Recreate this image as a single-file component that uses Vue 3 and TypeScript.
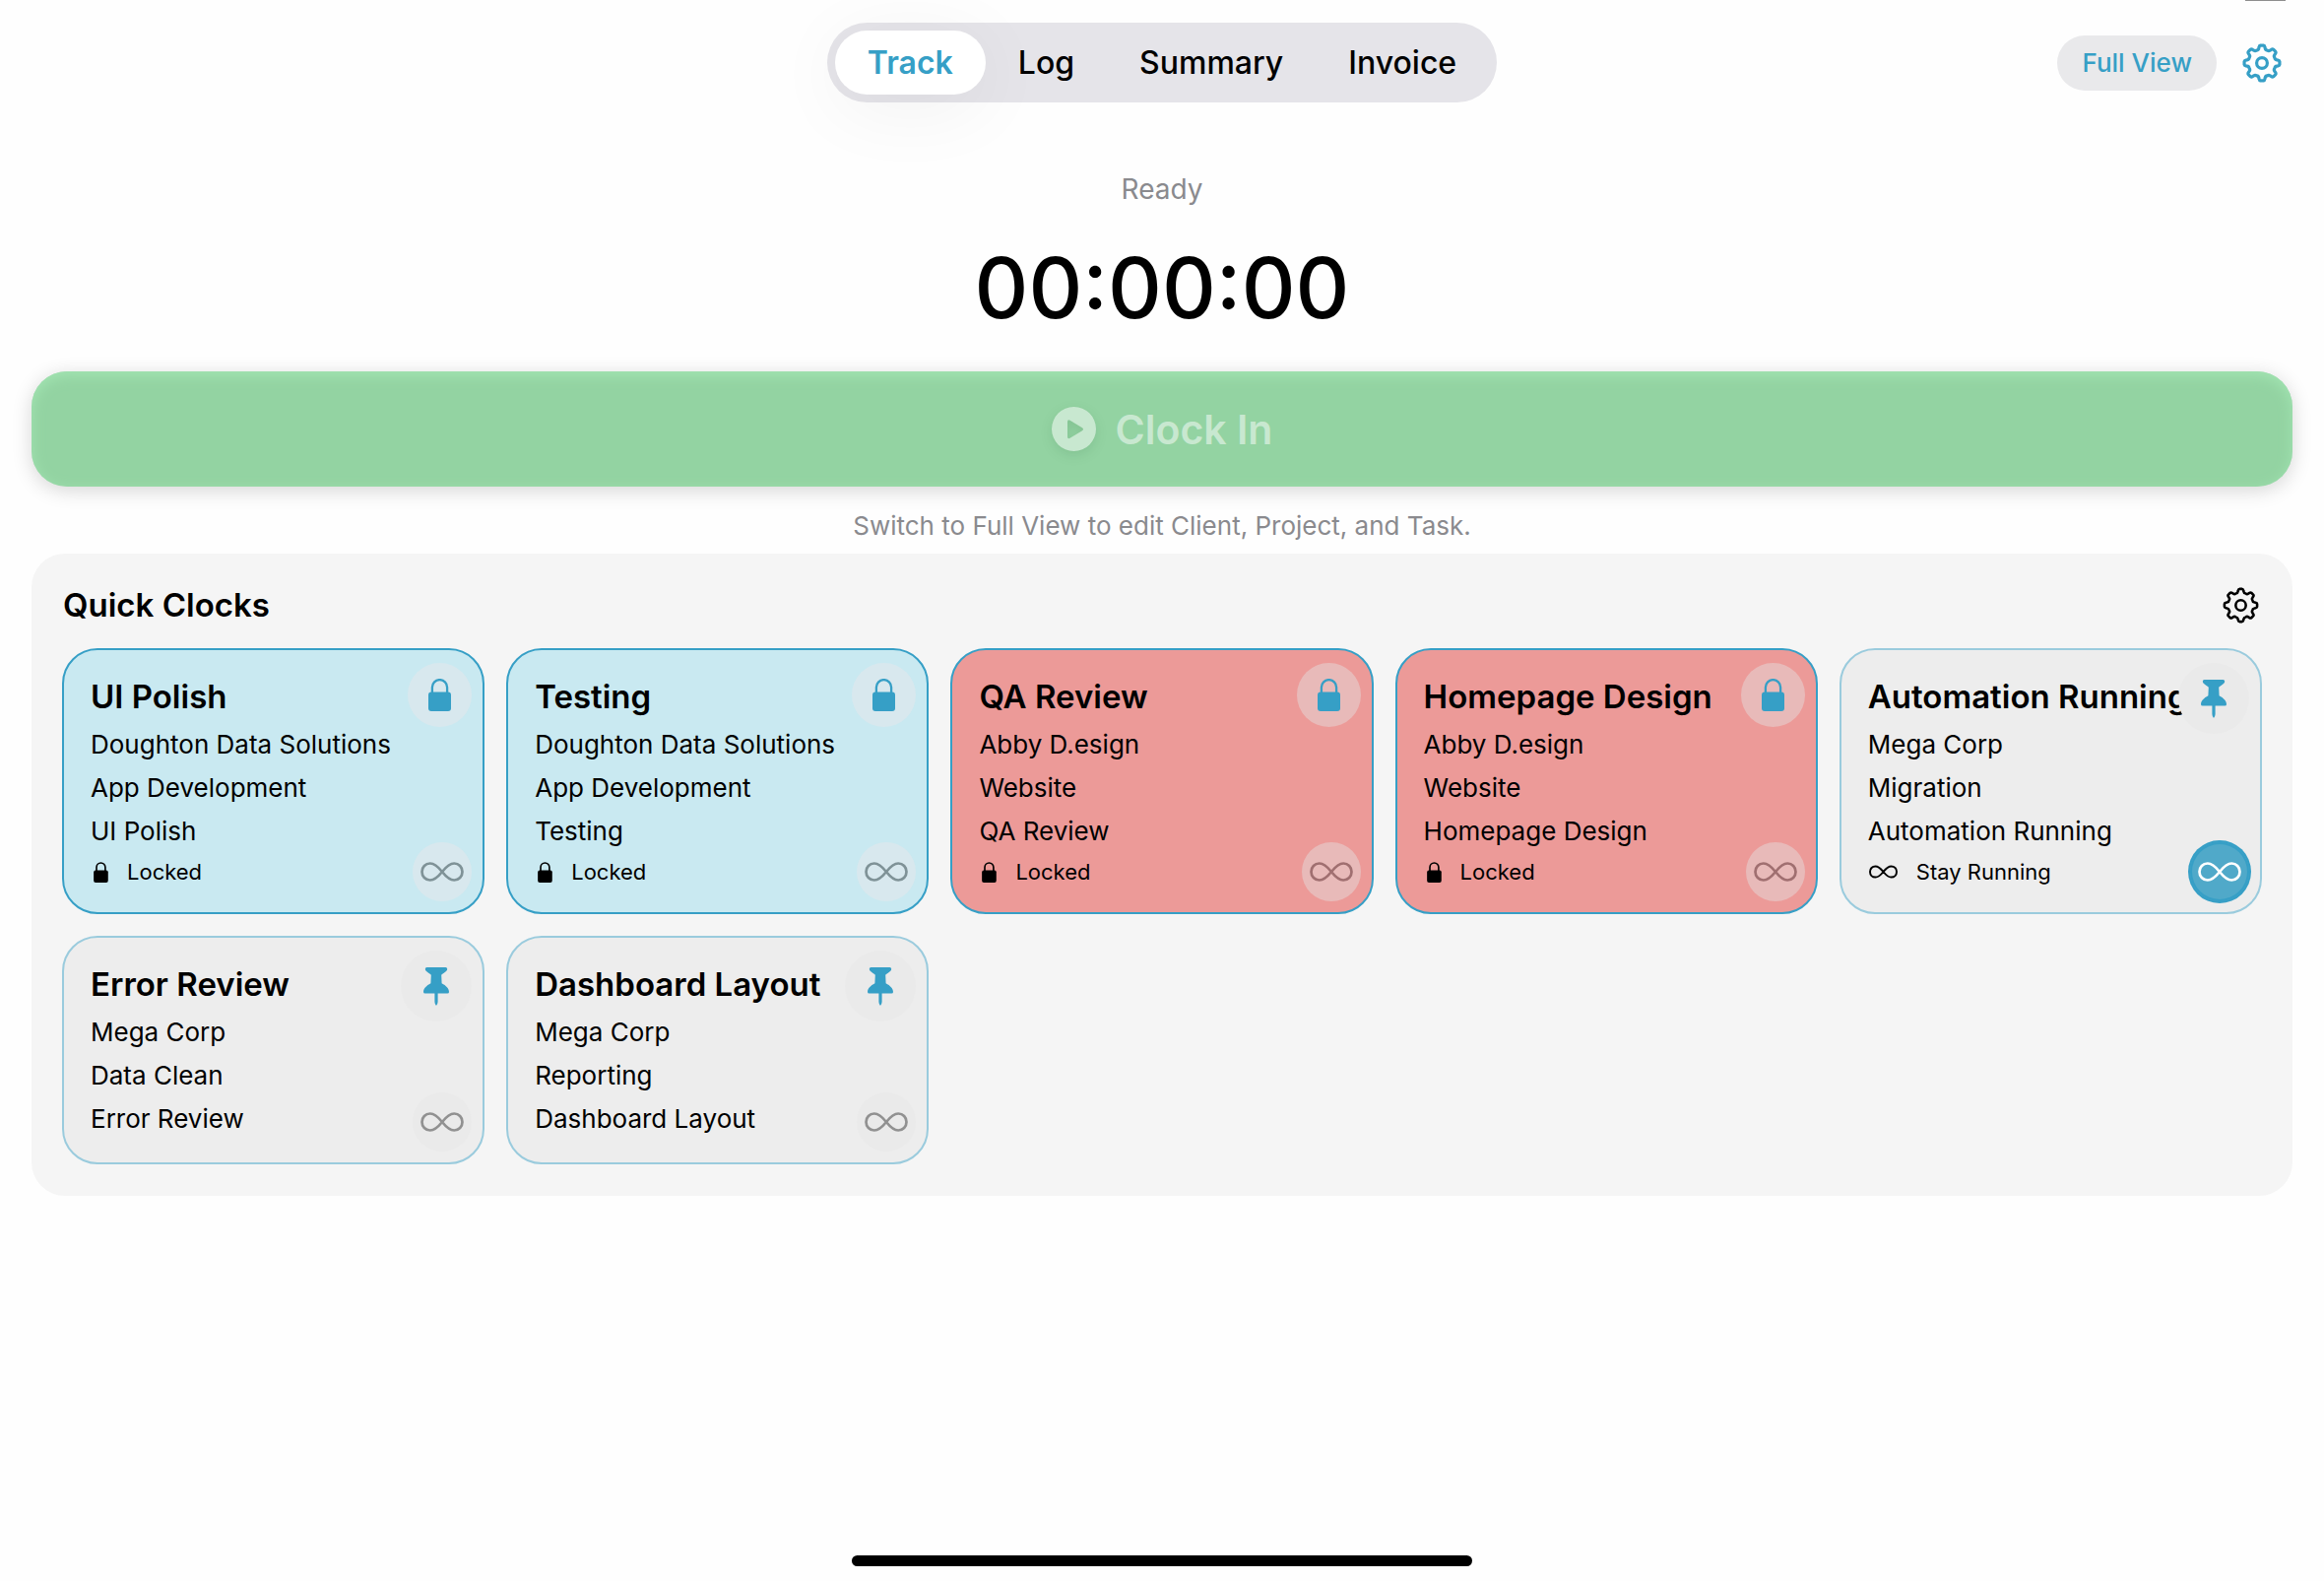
<script setup lang="ts">
import { ref } from 'vue'

type Tone = 'blue' | 'red' | 'plain'

interface QuickClock {
  id: number
  title: string
  client: string
  project: string
  task: string
  tone: Tone
  locked: boolean
  stayRunning: boolean
}

const tabs = ['Track', 'Log', 'Summary', 'Invoice']
const activeTab = ref('Track')

const clocks = ref<QuickClock[]>([
  { id: 1, title: 'UI Polish', client: 'Doughton Data Solutions', project: 'App Development', task: 'UI Polish', tone: 'blue', locked: true, stayRunning: false },
  { id: 2, title: 'Testing', client: 'Doughton Data Solutions', project: 'App Development', task: 'Testing', tone: 'blue', locked: true, stayRunning: false },
  { id: 3, title: 'QA Review', client: 'Abby D.esign', project: 'Website', task: 'QA Review', tone: 'red', locked: true, stayRunning: false },
  { id: 4, title: 'Homepage Design', client: 'Abby D.esign', project: 'Website', task: 'Homepage Design', tone: 'red', locked: true, stayRunning: false },
  { id: 5, title: 'Automation Running', client: 'Mega Corp', project: 'Migration', task: 'Automation Running', tone: 'plain', locked: false, stayRunning: true },
  { id: 6, title: 'Error Review', client: 'Mega Corp', project: 'Data Clean', task: 'Error Review', tone: 'plain', locked: false, stayRunning: false },
  { id: 7, title: 'Dashboard Layout', client: 'Mega Corp', project: 'Reporting', task: 'Dashboard Layout', tone: 'plain', locked: false, stayRunning: false },
])

const infinityPath =
  'M22 10C18 5 14 1.5 9.8 1.5C5 1.5 1.5 5.2 1.5 10S5 18.5 9.8 18.5C14 18.5 18 15 22 10C26 5 30 1.5 34.2 1.5C39 1.5 42.5 5.2 42.5 10S39 18.5 34.2 18.5C30 18.5 26 15 22 10Z'

// Eight-toothed gear outline centred on 20,20, with curved tooth tips and valleys.
function gearOutline(): string {
  const at = (deg: number, r: number): string => {
    const a = ((deg - 90) * Math.PI) / 180
    return `${(20 + r * Math.cos(a)).toFixed(2)} ${(20 + r * Math.sin(a)).toFixed(2)}`
  }
  let d = ''
  for (let i = 0; i < 8; i++) {
    const c = i * 45
    d += `${i === 0 ? 'M' : 'L'}${at(c - 12, 15.4)}`
    d += `L${at(c - 10, 16.6)}Q${at(c - 8.5, 18)} ${at(c - 5, 18)}`
    d += `L${at(c + 5, 18)}Q${at(c + 8.5, 18)} ${at(c + 10, 16.6)}`
    d += `L${at(c + 12, 15.4)}Q${at(c + 14.5, 13.6)} ${at(c + 22.5, 14)}Q${at(c + 30.5, 13.6)} ${at(c + 33, 15.4)}`
  }
  return d + 'Z'
}
const gearPath = gearOutline()
</script>

<template>
  <div class="page">
    <div class="grabber"></div>
    <header class="topbar">
      <nav class="tabs" aria-label="Sections">
        <button
          v-for="tab in tabs"
          :key="tab"
          type="button"
          class="tab"
          :class="{ active: tab === activeTab }"
          @click="activeTab = tab"
        >{{ tab }}</button>
      </nav>
      <div class="actions">
        <button type="button" class="full-view">Full View</button>
        <button type="button" class="icon-button accent" aria-label="Settings">
          <svg class="gear" viewBox="0 0 40 40" fill="none" stroke="currentColor" stroke-width="3.2" stroke-linejoin="round">
            <path :d="gearPath" />
            <circle cx="20" cy="20" r="5.4" />
          </svg>
        </button>
      </div>
    </header>

    <main class="content">
      <p class="status">Ready</p>
      <p class="timer">00:00:00</p>
      <button type="button" class="clock-in" disabled>
        <svg class="play" viewBox="0 0 45 45">
          <path fill="currentColor" fill-rule="evenodd" d="M22.500 0A22.500 22.500 0 1 1 22.500 45A22.500 22.500 0 1 1 22.500 0ZM16 15.200V30.200Q16 33 18.600 31.800L31 24.300Q33 22.800 31 21.200L18.600 13.700Q16 12.500 16 15.200Z" />
        </svg>
        <span>Clock In</span>
      </button>
      <p class="hint">Switch to Full View to edit Client, Project, and Task.</p>

      <section class="panel">
        <div class="panel-head">
          <h2>Quick Clocks</h2>
          <button type="button" class="icon-button" aria-label="Quick Clock settings">
            <svg class="gear small" viewBox="0 0 40 40" fill="none" stroke="currentColor" stroke-width="2.8" stroke-linejoin="round">
              <path :d="gearPath" />
              <circle cx="20" cy="20" r="5.6" />
            </svg>
          </button>
        </div>

        <div class="grid">
          <article v-for="clock in clocks" :key="clock.id" class="card" :class="clock.tone">
            <h3>{{ clock.title }}</h3>
            <p class="line">{{ clock.client }}</p>
            <p class="line">{{ clock.project }}</p>
            <p class="line">{{ clock.task }}</p>
            <p v-if="clock.locked" class="state">
              <svg class="mini-lock" viewBox="-3 0 26 33">
                <path fill="none" stroke="currentColor" stroke-width="2.6" d="M4.500 15V8.500A7 7 0 0 1 18.500 8.500V15" />
                <rect x="0" y="13.500" width="23" height="19.500" rx="3" fill="currentColor" />
              </svg>
              <span>Locked</span>
            </p>
            <p v-else-if="clock.stayRunning" class="state">
              <svg class="mini-infinity" viewBox="0 0 44 20" fill="none" stroke="currentColor" stroke-width="3">
                <path :d="infinityPath" />
              </svg>
              <span>Stay Running</span>
            </p>

            <button v-if="clock.locked" type="button" class="badge lock" aria-label="Unlock">
              <svg width="23" height="33" viewBox="0 0 23 33">
                <path fill="none" stroke="currentColor" stroke-width="2.300" d="M3.900 15V8.700A7.600 7.600 0 0 1 19.100 8.700V15" />
                <rect x="0" y="13.500" width="23" height="19.500" rx="3" fill="currentColor" />
              </svg>
            </button>
            <button v-else type="button" class="badge pin" aria-label="Unpin">
              <svg width="26" height="39" viewBox="0 0 26 39">
                <path fill="currentColor" d="M3.500 0H22.500Q24.200 0 24.200 1.700Q24.200 3 23 4Q20.800 6 18.600 7.200L18.200 8L18.600 16.300C23 18.500 26 21.800 26 25Q26 26.600 24.300 26.600H14.600V35Q14.600 37 13 39Q11.400 37 11.400 35V26.600H1.700Q0 26.600 0 25C0 21.800 3 18.500 7.400 16.300L7.800 8L7.400 7.200Q5.200 6 3 4Q1.800 3 1.800 1.700Q1.800 0 3.500 0Z" />
              </svg>
            </button>

            <button
              type="button"
              class="badge infinity"
              :class="{ on: clock.stayRunning }"
              :aria-pressed="clock.stayRunning"
              aria-label="Stay Running"
              @click="clock.stayRunning = !clock.stayRunning"
            >
              <svg width="44" height="20" viewBox="0 0 44 20" fill="none" stroke="currentColor" stroke-width="2.700">
                <path :d="infinityPath" />
              </svg>
            </button>
          </article>
        </div>
      </section>
    </main>

    <div class="home-indicator"></div>
  </div>
</template>

<style>
body {
  margin: 0;
  background: #fefefe;
}
</style>

<style scoped>
.page {
  --accent: #369fc6;
  position: relative;
  display: flex;
  flex-direction: column;
  box-sizing: border-box;
  min-height: 100vh;
  padding: 23px 32px 15px;
  font-family: Inter, "Liberation Sans", sans-serif;
  color: #000;
}

button {
  margin: 0;
  padding: 0;
  border: 0;
  background: none;
  font: inherit;
  color: inherit;
}

p,
h2,
h3 {
  margin: 0;
}

svg {
  display: block;
}

.grabber {
  position: absolute;
  top: 0;
  right: 39px;
  width: 41px;
  height: 1px;
  background: #8e8e8e;
}

.topbar {
  display: grid;
  grid-template-columns: 1fr auto 1fr;
  align-items: center;
}

.tabs {
  grid-column: 2;
  display: flex;
  padding: 8px;
  border-radius: 41px;
  background: #e5e4e9;
}

.tab {
  padding: 0 33px;
  border-radius: 33px;
  font-size: 32px;
  font-weight: 500;
  line-height: 65px;
}

.tab.active {
  background: #fff;
  color: var(--accent);
  font-weight: 600;
  box-shadow: 0 12px 80px rgba(0, 0, 0, 0.06);
}

.actions {
  display: flex;
  align-items: center;
  justify-content: flex-end;
  gap: 26px;
  padding-right: 11px;
}

.full-view {
  padding: 0 25px;
  border-radius: 28px;
  background: #e9e9eb;
  color: var(--accent);
  font-size: 26px;
  font-weight: 500;
  line-height: 56px;
}

.accent {
  color: var(--accent);
}

.gear {
  width: 40px;
  height: 40px;
}

.gear.small {
  width: 37px;
  height: 37px;
}

.content {
  display: flex;
  flex-direction: column;
}

.status {
  margin-top: 70px;
  color: #8a8a8e;
  font-size: 28px;
  line-height: 36px;
  text-align: center;
}

.timer {
  margin-top: 31px;
  font-size: 85px;
  font-weight: 500;
  line-height: 104px;
  text-align: center;
}

.clock-in {
  display: flex;
  align-items: center;
  justify-content: center;
  gap: 20px;
  height: 117px;
  margin-top: 32px;
  border-radius: 36px;
  background: #93d3a2;
  box-shadow: 0 4px 20px rgba(0, 0, 0, 0.16), inset 0 4px 14px #a3e5b3;
  color: #c8e8d0;
  font-size: 41px;
  font-weight: 600;
}

.play {
  width: 45px;
  height: 45px;
  filter: drop-shadow(0 4px 6px rgba(0, 60, 20, 0.1));
}

.hint {
  margin-top: 24px;
  color: #8a8a8e;
  font-size: 26px;
  line-height: 32px;
  text-align: center;
}

.panel {
  margin-top: 12px;
  padding: 32px 31px;
  border-radius: 34px;
  background: #f5f5f5;
}

.panel-head {
  display: flex;
  align-items: center;
  justify-content: space-between;
  padding: 0 3px 0 1px;
}

.panel-head h2 {
  font-size: 33px;
  font-weight: 600;
  line-height: 40px;
}

.grid {
  display: grid;
  grid-template-columns: repeat(5, minmax(0, 1fr));
  align-items: start;
  gap: 22px;
  margin-top: 24px;
}

.card {
  position: relative;
  padding: 27px 27px 22px;
  border: 2px solid var(--accent);
  border-radius: 36px;
  white-space: nowrap;
}

.card.blue {
  --badge: #d8e8ee;
  --muted: #7f9297;
  background: #c9e9f1;
}

.card.red {
  --badge: #e8bab9;
  --muted: #a06f70;
  background: #ec9a98;
}

.card.plain {
  --badge: #eaeaea;
  --muted: #919191;
  border-color: #9acbdd;
  background: #ededed;
}

.card h3 {
  margin-bottom: 7px;
  font-size: 33px;
  font-weight: 600;
  line-height: 40px;
}

.line {
  font-size: 26px;
  line-height: 44px;
}

.state {
  display: flex;
  align-items: center;
  gap: 19px;
  padding-left: 1px;
  font-size: 22px;
  line-height: 38px;
}

.mini-lock {
  width: 17px;
  height: 21px;
}

.mini-infinity {
  width: 29px;
  height: 14px;
}

.badge {
  position: absolute;
  display: flex;
  align-items: center;
  justify-content: center;
  border-radius: 50%;
  background: var(--badge);
  color: var(--accent);
}

.badge.lock {
  top: 13px;
  right: 11px;
  width: 65px;
  height: 65px;
}

.badge.pin {
  top: 13px;
  right: 11px;
  width: 72px;
  height: 72px;
}

.badge.infinity {
  right: 11px;
  bottom: 11px;
  width: 60px;
  height: 60px;
  color: var(--muted);
}

.badge.infinity.on {
  background: #50a9c9;
  box-shadow: inset 0 0 0 2px var(--accent), 0 0 0 2px var(--accent);
  color: #fff;
}

.home-indicator {
  width: 630px;
  height: 11px;
  margin: auto auto 0;
  border-radius: 6px;
  background: #000;
}
</style>
